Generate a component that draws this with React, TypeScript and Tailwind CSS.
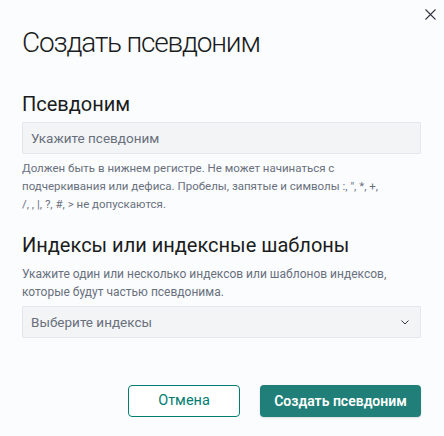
import React from 'react';

const App: React.FC = () => {
  return (
    <div className="w-[444px] h-[436px] bg-[#fbfcfd] overflow-hidden relative font-['Roboto',sans-serif]">
      {/* Close button */}
      <button className="absolute left-[424px] top-[8px] w-[12px] h-[12px] flex items-center justify-center text-[#343741]">
        <svg width="11" height="11" viewBox="0 0 11 11" fill="none" stroke="currentColor" strokeWidth="1.1">
          <path d="M0.5 0.5 L10.5 10.5 M10.5 0.5 L0.5 10.5" />
        </svg>
      </button>

      <div className="flex flex-col pl-[22px] pr-[23px]">
        <h1 className="mt-[25px] text-[28px] leading-[36px] font-light text-[#1a1c21] tracking-[-1.2px]">
          Создать псевдоним
        </h1>

        {/* Alias */}
        <h2 className="mt-[31px] text-[20px] leading-[24px] font-normal text-[#1a1c21]">Псевдоним</h2>
        <div className="mt-[6px] h-[32px] bg-[#f3f4f6] border border-[#e4e6eb] rounded-[2px] flex items-center px-[8px]">
          <span className="text-[13.5px] text-[#69707d]">Укажите псевдоним</span>
        </div>
        <p className="mt-[5px] text-[11.5px] leading-[18px] text-[#69707d]">
          Должен быть в нижнем регистре. Не может начинаться с<br />
          подчеркивания или дефиса. Пробелы, запятые и символы :, ", *, +,<br />
          /, , |, ?, #, &gt; не допускаются.
        </p>

        {/* Indices */}
        <h2 className="mt-[20px] text-[20px] leading-[24px] font-normal text-[#1a1c21]">
          Индексы или индексные шаблоны
        </h2>
        <p className="mt-[8px] text-[12px] leading-[18px] text-[#69707d]">
          Укажите один или несколько индексов или шаблонов индексов,<br />
          которые будут частью псевдонима.
        </p>
        <div className="mt-[5px] h-[32px] bg-[#f3f4f6] border border-[#e4e6eb] rounded-[2px] flex items-center justify-between pl-[8px] pr-[11px]">
          <span className="text-[13.5px] text-[#69707d]">Выберите индексы</span>
          <svg width="8" height="5" viewBox="0 0 8 5" fill="none" stroke="#343741" strokeWidth="1">
            <path d="M0.5 0.5 L4 4 L7.5 0.5" />
          </svg>
        </div>

        {/* Footer */}
        <div className="mt-[47px] flex justify-end gap-[20px]">
          <button className="w-[112px] h-[32px] border border-[#017d73] rounded-[4px] bg-white text-[14.5px] text-[#017d73]">
            Отмена
          </button>
          <button className="w-[161px] h-[32px] rounded-[4px] bg-[#207f78] text-[14px] font-semibold text-white shadow-sm">
            Создать псевдоним
          </button>
        </div>
      </div>
    </div>
  );
};

export default App;
